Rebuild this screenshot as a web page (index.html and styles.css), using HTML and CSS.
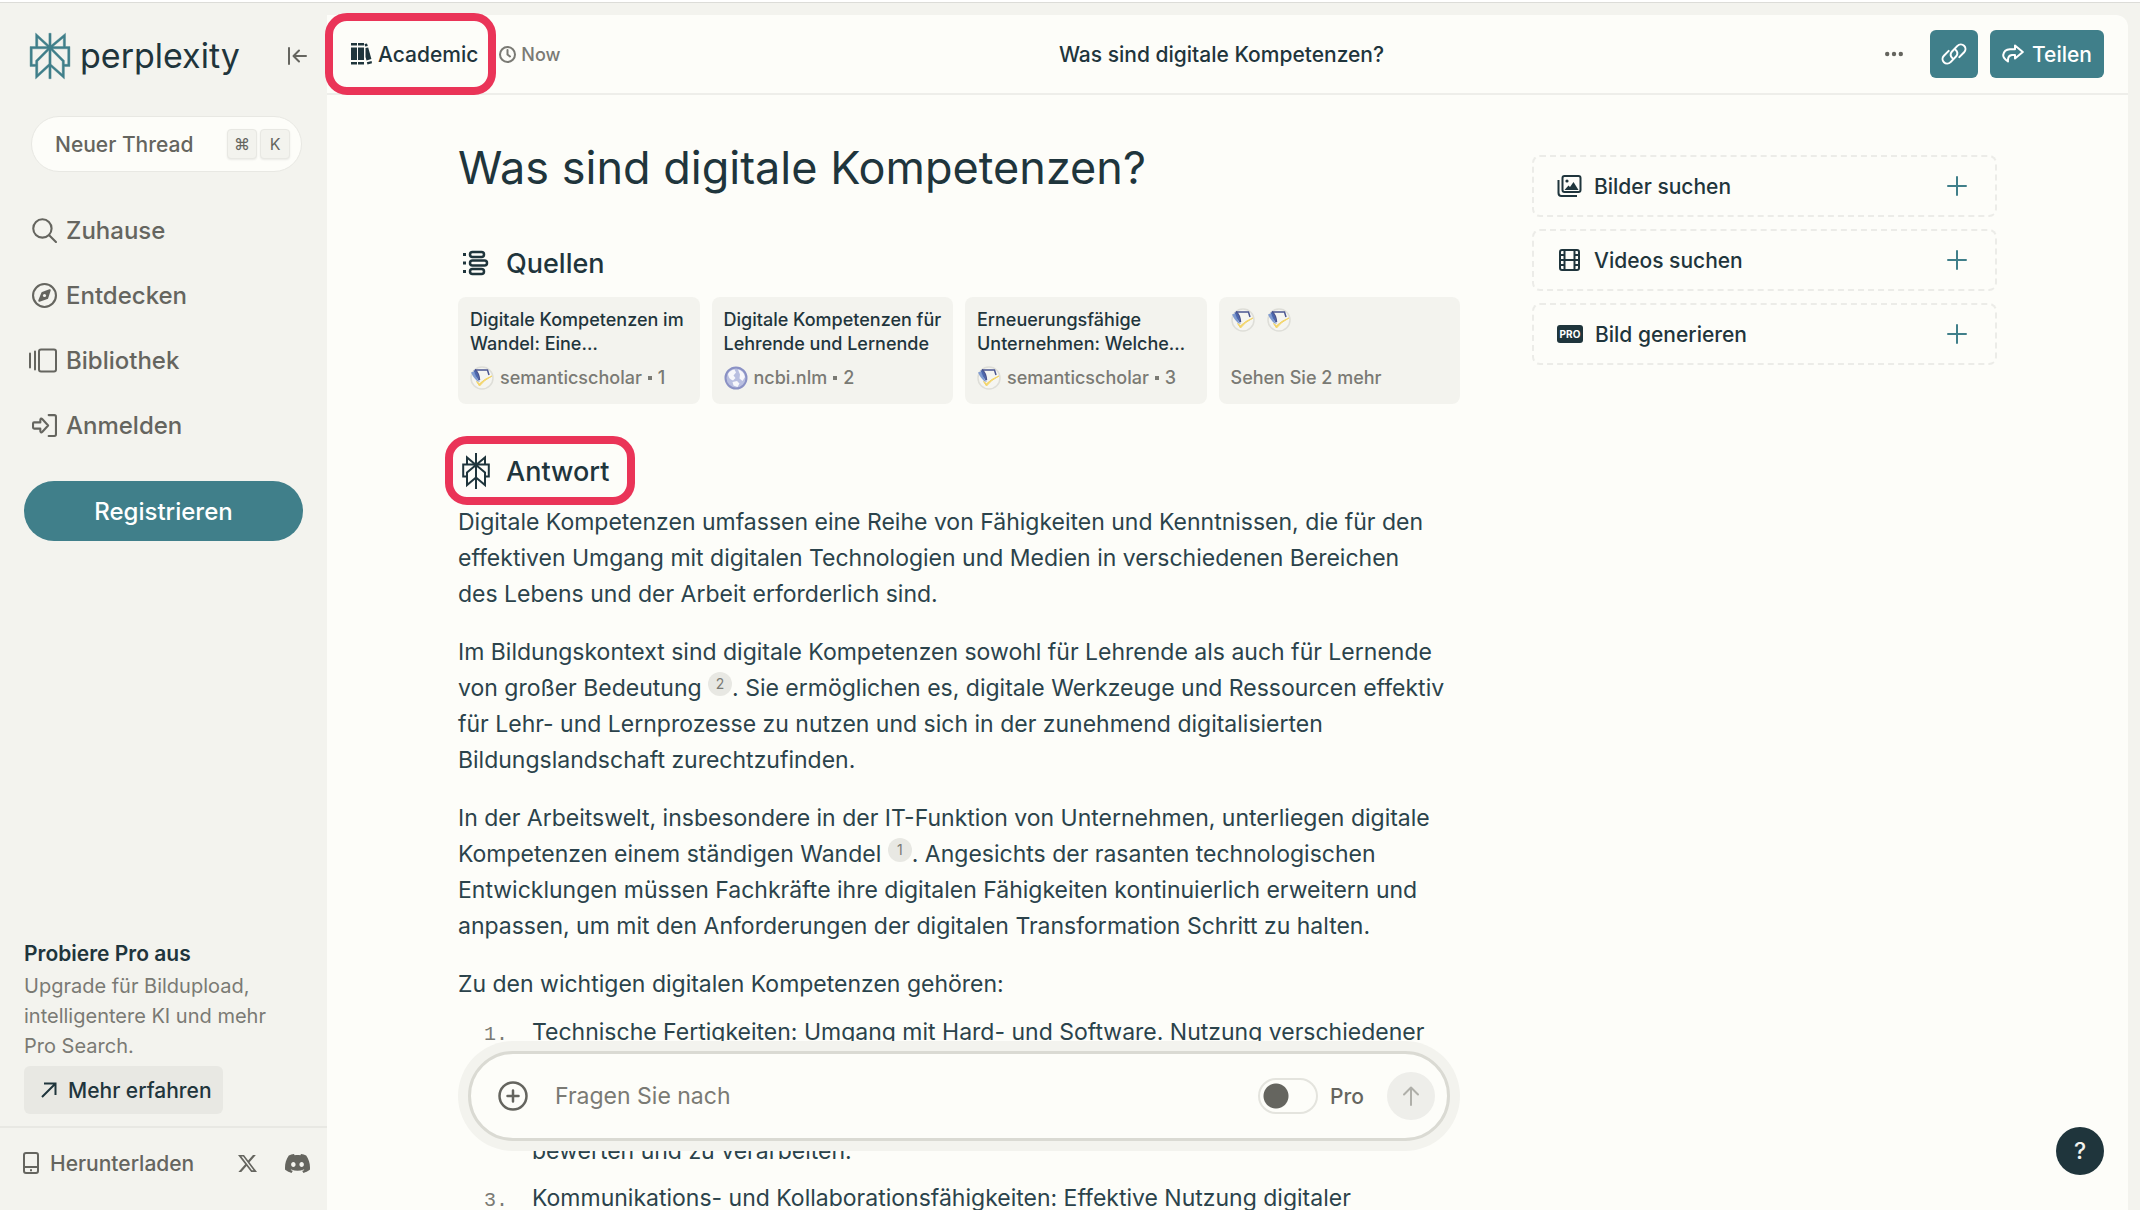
FILE: index.html
```html
<!DOCTYPE html>
<html lang="de">
<head>
<meta charset="utf-8">
<title>Was sind digitale Kompetenzen?</title>
<meta name="viewport" content="width=device-width, initial-scale=1">
<link rel="stylesheet" href="styles.css">
</head>
<body>
<svg class="defs" aria-hidden="true">
  <symbol id="scholar" viewBox="0 0 24 24">
    <circle cx="12" cy="12" r="11" fill="#f5f5f1" stroke="#deded8" stroke-width="1.5"/>
    <path d="M1 6.500L4 5.500L9 16.500Q4 13 1 6.500Z" fill="#7f9bd0"/>
    <path d="M3.500 4.500L6 4Q9 9 9.500 16Q5 10 3.500 4.500Z" fill="#4b68b0"/>
    <path d="M5 4H17.500L19 9" fill="none" stroke="#4a5590" stroke-width="1.500"/>
    <path d="M5 3.500Q9 7 9.500 14" fill="none" stroke="#4a5590" stroke-width="1.500"/>
    <path d="M6.500 15.500L9.500 20Q14 14 22 10Q14 13 9.600 17.800Z" fill="#f3d568" stroke="#f3d568" stroke-linejoin="round"/>
  </symbol>
  <symbol id="plus" viewBox="0 0 20 20">
    <path d="M10 1V19M1 10H19" fill="none" stroke="currentColor" stroke-width="2" stroke-linecap="round"/>
  </symbol>
</svg>
<div class="app">
  <aside class="sidebar">
    <div class="brand">
      <a class="brand-link" href="#">
        <svg class="brand-mark" viewBox="0 0 24 24" aria-hidden="true"><path fill="currentColor" stroke="currentColor" stroke-width=".2" d="M22.3977 7.0896h-2.3106V.0676l-7.5094 6.3542V.1577h-1.1554v6.1966L4.4904 0v7.0896H1.6023v10.3976h2.8882V24l6.932-6.3591v6.2005h1.1554v-6.0469l6.9318 6.1807v-6.4879h2.8882V7.0896zm-3.4657-4.531v4.531h-5.355l5.355-4.531zm-13.2862.0676 4.8691 4.4634H5.6458V2.6262zM2.7576 16.332V8.245h7.8476l-6.1149 6.1147v1.9723H2.7576zm2.8882 5.0404v-3.8852h.0001v-2.6488l5.7763-5.7764v7.0111l-5.7764 5.2993zm12.7086.0248-5.7766-5.1509V9.0618l5.7766 5.7766v6.5588zm2.8882-5.0652h-1.733v-1.9723L13.3948 8.245h7.8478v8.087z"/></svg>
        <span class="brand-name">perplexity</span>
      </a>
      <button class="icon-button" type="button" aria-label="Seitenleiste einklappen">
        <svg width="20" height="18" viewBox="0 0 20 18" fill="none" stroke="currentColor" stroke-width="2" stroke-linecap="round" stroke-linejoin="round"><path d="M2 1V17M19 9H7M12 3.500L6.500 9L12 14.500"/></svg>
      </button>
    </div>
    <button class="new-thread" type="button"><span>Neuer Thread</span><span class="keys"><kbd>⌘</kbd><kbd>K</kbd></span></button>
    <nav class="nav">
      <a href="#"><svg viewBox="0 0 24 24"><circle cx="10" cy="10" r="8.800"/><path d="M16.500 16.500L23 23"/></svg>Zuhause</a>
      <a href="#"><svg viewBox="0 0 24 24"><circle cx="12" cy="12" r="11"/><path d="M17 7L10 9.500L7 17L14.500 14.500Z" fill="currentColor"/><circle cx="12" cy="12" r="1.500" fill="#f3f3ee" stroke="none"/></svg>Entdecken</a>
      <a href="#"><svg class="wide" viewBox="0 0 28 24"><path d="M1 5V19M6 3V21"/><rect x="10" y="1" width="17" height="22" rx="2"/></svg>Bibliothek</a>
      <a href="#"><svg viewBox="0 0 24 24"><path d="M16 2H21.500Q23 2 23 3.500V20.500Q23 22 21.500 22H16"/><path d="M1 10Q1 9 2 9H8V6.500Q8.500 4.500 10 6L15.500 12L10 18Q8.500 19.500 8 17.500V15H2Q1 15 1 14Z"/></svg>Anmelden</a>
    </nav>
    <button class="signup" type="button">Registrieren</button>
    <section class="upsell">
      <h2>Probiere Pro aus</h2>
      <p>Upgrade für Bildupload, intelligentere KI und mehr Pro Search.</p>
      <button class="learn-more" type="button"><svg width="16" height="16" viewBox="0 0 16 16" fill="none" stroke="currentColor" stroke-width="2"><path d="M1 15L14.500 1.500M3 1.500H14.500V13"/></svg>Mehr erfahren</button>
    </section>
    <footer class="sidebar-footer">
      <a class="download" href="#"><svg width="16" height="22" viewBox="0 0 16 22" fill="none" stroke="currentColor" stroke-width="2"><rect x="1" y="1" width="14" height="20" rx="2"/><path d="M1 15H15M7 18.200H9"/></svg>Herunterladen</a>
      <a href="#" aria-label="X"><svg width="19" height="19" viewBox="0 0 24 24" fill="currentColor"><path d="M18.901 1.153h3.680l-8.040 9.190L24 22.846h-7.406l-5.800-7.584-6.638 7.584H.474l8.600-9.830L0 1.154h7.594l5.243 6.932ZM17.610 20.644h2.039L6.486 3.240H4.298Z"/></svg></a>
      <a href="#" aria-label="Discord"><svg width="25" height="25" viewBox="0 0 24 24" fill="currentColor"><path d="M20.317 4.3698a19.7913 19.7913 0 00-4.8851-1.5152.0741.0741 0 00-.0785.0371c-.211.3753-.4447.8648-.6083 1.2495-1.8447-.2762-3.68-.2762-5.4868 0-.1636-.3933-.4058-.8742-.6177-1.2495a.077.077 0 00-.0785-.037 19.7363 19.7363 0 00-4.8852 1.515.0699.0699 0 00-.0321.0277C.5334 9.0458-.319 13.5799.0992 18.0578a.0824.0824 0 00.0312.0561c2.0528 1.5076 4.0413 2.4228 5.9929 3.0294a.0777.0777 0 00.0842-.0276c.4616-.6304.8731-1.2952 1.226-1.9942a.076.076 0 00-.0416-.1057c-.6528-.2476-1.2743-.5495-1.8722-.8923a.077.077 0 01-.0076-.1277c.1258-.0943.2517-.1923.3718-.2914a.0743.0743 0 01.0776-.0105c3.9278 1.7933 8.18 1.7933 12.0614 0a.0739.0739 0 01.0785.0095c.1202.099.246.1981.3728.2924a.077.077 0 01-.0066.1276 12.2986 12.2986 0 01-1.873.8914.0766.0766 0 00-.0407.1067c.3604.698.7719 1.3628 1.225 1.9932a.076.076 0 00.0842.0286c1.961-.6067 3.9495-1.5219 6.0023-3.0294a.077.077 0 00.0313-.0552c.5004-5.177-.8382-9.6739-3.5485-13.6604a.061.061 0 00-.0312-.0286zM8.02 15.3312c-1.1825 0-2.1569-1.0857-2.1569-2.419 0-1.3332.9555-2.4189 2.157-2.4189 1.2108 0 2.1757 1.0952 2.1568 2.419 0 1.3332-.9555 2.4189-2.1569 2.4189zm7.9748 0c-1.1825 0-2.1569-1.0857-2.1569-2.419 0-1.3332.9554-2.4189 2.1569-2.4189 1.2108 0 2.1757 1.0952 2.1568 2.419 0 1.3332-.946 2.4189-2.1568 2.4189Z"/></svg></a>
    </footer>
  </aside>

  <main class="panel">
    <header class="topbar">
      <div class="topbar-left">
        <button class="focus marked" type="button"><svg width="21" height="22" viewBox="0 0 21 22" fill="currentColor"><path d="M0 0H6V2.500H0ZM0 4.500H6V17H0ZM0 19H6V21.500H0ZM7 0H13V2.500H7ZM7 4.500H13V17H7ZM7 19H13V21.500H7ZM13.500 1L16 .4L16.800 3L14.200 3.600ZM14.500 5L17.200 4.400L20.400 16L15.500 17.500L14.500 14ZM15.800 19.200L20.600 18L21 20.200L16.500 21.500Z"/></svg>Academic</button>
        <span class="time"><svg width="17" height="17" viewBox="0 0 17 17" fill="none" stroke="currentColor" stroke-width="2" stroke-linecap="round"><circle cx="8.500" cy="8.500" r="7.500"/><path d="M8.500 4V8.500L11 10.500"/></svg>Now</span>
      </div>
      <div class="topbar-title">Was sind digitale Kompetenzen?</div>
      <div class="topbar-actions">
        <button class="icon-button more" type="button" aria-label="Mehr"><svg width="18" height="6" viewBox="0 0 18 6" fill="currentColor"><circle cx="2.200" cy="3" r="2.200"/><circle cx="9" cy="3" r="2.200"/><circle cx="15.800" cy="3" r="2.200"/></svg></button>
        <button class="primary square" type="button" aria-label="Link kopieren"><svg width="26" height="22" viewBox="0 0 26 22" fill="none" stroke="currentColor" stroke-width="2" stroke-linecap="round"><path d="M11.500 15.200C9.300 13.500 9 10.600 10.800 8.700L16.400 2.900C18.300 1 21.300 1 23.100 2.800C24.900 4.600 24.900 7.400 23.100 9.300L18.300 14.100"/><path d="M14.500 6.800C16.700 8.500 17 11.400 15.200 13.300L9.600 19.100C7.700 21 4.700 21 2.900 19.200C1.100 17.400 1.100 14.600 2.900 12.700L7.700 7.900"/></svg></button>
        <button class="primary" type="button"><svg width="22" height="20" viewBox="0 0 22 20" fill="none" stroke="currentColor" stroke-width="2" stroke-linejoin="round"><path d="M13 1.500L20.800 8L13 14.500V11H10Q5.500 11.500 6 17.500Q1 14 1.200 11Q2 5.500 8 5.200H13Z"/></svg>Teilen</button>
      </div>
    </header>

    <div class="scroll">
      <div class="columns">
        <article class="thread">
          <h1>Was sind digitale Kompetenzen?</h1>
          <h2 class="section-title"><svg width="28" height="26" viewBox="0 0 28 26" fill="none" stroke="currentColor" stroke-width="2.500"><rect x="8" y="2" width="14" height="5" rx="2.500"/><rect x="8" y="10.500" width="17" height="5" rx="2.500"/><rect x="8" y="19" width="14" height="5" rx="2.500"/><path d="M1 4.500H4M1 13H4M1 21.500H4" stroke-width="3"/></svg>Quellen</h2>
          <div class="sources">
            <a class="source" href="#"><span class="source-title">Digitale Kompetenzen im<br>Wandel: Eine…</span><span class="source-meta"><svg class="favicon"><use href="#scholar"/></svg>semanticscholar<i></i>1</span></a>
            <a class="source" href="#"><span class="source-title">Digitale Kompetenzen für<br>Lehrende und Lernende</span><span class="source-meta"><svg class="favicon" viewBox="0 0 24 24"><circle cx="12" cy="12" r="10.500" fill="#b9bfe0" stroke="#8a91c4" stroke-width="2"/><path d="M4 8Q6 4 10.500 3.500L12 6.500L9.500 9.500L11.500 12L9 14.500Q4.500 13 4 8ZM14 3.500Q20 5 21 11L18.500 15L15.500 12.500L16 8.500ZM8.500 16L13 15L15.500 17.500L13.500 21L9.500 19.500Z" fill="#f7f7fb"/></svg>ncbi.nlm<i></i>2</span></a>
            <a class="source" href="#"><span class="source-title">Erneuerungsfähige<br>Unternehmen: Welche…</span><span class="source-meta"><svg class="favicon"><use href="#scholar"/></svg>semanticscholar<i></i>3</span></a>
            <a class="source" href="#"><span class="favicons"><svg class="favicon"><use href="#scholar"/></svg><svg class="favicon"><use href="#scholar"/></svg></span><span class="source-more">Sehen Sie 2 mehr</span></a>
          </div>
          <h2 class="section-title answer-title"><span class="marked answer-mark"><svg width="28" height="36" viewBox="0 0 28 36" fill="none" stroke="currentColor" stroke-width="2"><path d="M14 0V36M5 11.500V4.500L14 12L23 4.500V11.500M5 23.500H1.200V11.500H26.800V23.500H23M14 12L5 19.500V32L14 24.500L23 32V19.500L14 12"/></svg>Antwort</span></h2>
          <div class="answer">
            <p>Digitale Kompetenzen umfassen eine Reihe von Fähigkeiten und Kenntnissen, die für den<br>effektiven Umgang mit digitalen Technologien und Medien in verschiedenen Bereichen<br>des Lebens und der Arbeit erforderlich sind.</p>
            <p>Im Bildungskontext sind digitale Kompetenzen sowohl für Lehrende als auch für Lernende<br>von großer Bedeutung <a class="cite" href="#">2</a>. Sie ermöglichen es, digitale Werkzeuge und Ressourcen effektiv<br>für Lehr- und Lernprozesse zu nutzen und sich in der zunehmend digitalisierten<br>Bildungslandschaft zurechtzufinden.</p>
            <p>In der Arbeitswelt, insbesondere in der IT-Funktion von Unternehmen, unterliegen digitale<br>Kompetenzen einem ständigen Wandel <a class="cite" href="#">1</a>. Angesichts der rasanten technologischen<br>Entwicklungen müssen Fachkräfte ihre digitalen Fähigkeiten kontinuierlich erweitern und<br>anpassen, um mit den Anforderungen der digitalen Transformation Schritt zu halten.</p>
            <p>Zu den wichtigen digitalen Kompetenzen gehören:</p>
            <ol>
              <li>Technische Fertigkeiten: Umgang mit Hard- und Software. Nutzung verschiedener<br>digitaler Geräte und Anwendungen.</li>
              <li>Informationskompetenz: Fähigkeit, Informationen zu suchen, zu<br>bewerten und zu verarbeiten.</li>
              <li>Kommunikations- und Kollaborationsfähigkeiten: Effektive Nutzung digitaler<br>Kommunikationsmittel und Plattformen.</li>
            </ol>
          </div>
          <form class="composer">
            <div class="composer-box">
              <button class="icon-button" type="button" aria-label="Anhängen"><svg width="30" height="30" viewBox="0 0 30 30" fill="none" stroke="currentColor" stroke-width="2.500" stroke-linecap="round"><circle cx="15" cy="15" r="13.500"/><path d="M15 9.500V20.500M9.500 15H20.500"/></svg></button>
              <input class="question" type="text" placeholder="Fragen Sie nach" aria-label="Fragen Sie nach">
              <label class="pro"><input type="checkbox">Pro</label>
              <button class="send" type="submit" aria-label="Senden"><svg width="18" height="20" viewBox="0 0 18 20" fill="none" stroke="currentColor" stroke-width="2" stroke-linecap="round" stroke-linejoin="round"><path d="M9 19V1.500M2 8.500L9 1.500L16 8.500"/></svg></button>
            </div>
          </form>
        </article>
        <aside class="tools">
          <button type="button"><svg width="25" height="24" viewBox="0 0 25 24" fill="none" stroke="currentColor" stroke-width="2"><rect x="5.500" y="2" width="18" height="16" rx="2"/><path d="M1.500 6V19Q1.500 22 4.500 22H20"/><path d="M7.500 16L11.500 11.500L13 13L16.500 8L21.500 16Z" fill="currentColor" stroke="none"/><circle cx="10" cy="7" r="1.600" fill="currentColor" stroke="none"/></svg><span>Bilder suchen</span><svg class="plus"><use href="#plus"/></svg></button>
          <button type="button"><svg width="25" height="24" viewBox="0 0 25 24" fill="none" stroke="currentColor" stroke-width="2"><rect x="3" y="2" width="19" height="20" rx="2"/><path d="M7.500 2V22M17.500 2V22M7.500 12H17.500M3 7H7.500M3 12H7.500M3 17H7.500M17.500 7H22M17.500 12H22M17.500 17H22"/></svg><span>Videos suchen</span><svg class="plus"><use href="#plus"/></svg></button>
          <button type="button"><b class="pro-badge">PRO</b><span>Bild generieren</span><svg class="plus"><use href="#plus"/></svg></button>
        </aside>
      </div>
    </div>
    <button class="help" type="button" aria-label="Hilfe">?</button>
  </main>
</div>
</body>
</html>
```
FILE: styles.css
```css
:root {
  --page: #f3f3ee;
  --panel: #fdfdf9;
  --line: #e8e8e3;
  --teal: #407f8a;
  --ink: #1f353c;
  --body: #2b434b;
  --muted: #65655f;
  --soft: #7a7a74;
  --mark: #ea3458;
}
* { box-sizing: border-box; }
body {
  margin: 0;
  background: var(--page);
  color: var(--ink);
  font-family: Inter, "Liberation Sans", sans-serif;
  font-size: 23px;
}
button { border: 0; padding: 0; background: none; color: inherit; font: inherit; cursor: pointer; }
a { color: inherit; text-decoration: none; }
h1, h2, p, ol { margin: 0; padding: 0; }
svg { flex: none; display: block; }
.defs { position: absolute; width: 0; height: 0; }

.app {
  display: flex;
  height: 100vh;
  border-top: 2px solid #fff;
  box-shadow: inset 0 1px #dcdcd8;
}

/* Sidebar */
.sidebar {
  flex: none;
  width: 327px;
  display: flex;
  flex-direction: column;
  padding-top: 30px;
  color: var(--muted);
  font-size: 21px;
}
.brand { display: flex; align-items: center; justify-content: space-between; padding: 0 20px 0 27px; }
.brand-link { display: flex; align-items: center; gap: 7px; color: var(--teal); }
.brand-mark { width: 46px; height: 48px; }
.brand-name { font-size: 34px; line-height: 44px; color: var(--ink); }
.icon-button { display: grid; place-items: center; color: var(--muted); }
.new-thread {
  display: flex;
  align-items: center;
  justify-content: space-between;
  height: 56px;
  margin: 36px 25px 0 31px;
  padding: 0 11px 0 23px;
  border: 1px solid var(--line);
  border-radius: 28px;
  background: var(--panel);
  font-weight: 500;
}
.keys { display: flex; gap: 3px; }
kbd {
  display: grid;
  place-items: center;
  width: 30px;
  height: 30px;
  border: 1px solid var(--line);
  border-radius: 4px;
  background: var(--page);
  box-shadow: 0 1px 2px #00000014;
  font-family: inherit;
  font-size: 16px;
  font-weight: 400;
}
.nav { display: grid; margin-top: 26px; }
.nav a { display: flex; align-items: center; gap: 9px; height: 65px; padding-left: 32px; font-size: 24px; font-weight: 500; }
.nav svg { width: 25px; height: 25px; fill: none; stroke: currentColor; stroke-width: 2; stroke-linecap: round; stroke-linejoin: round; }
.nav .wide { width: 28px; margin-left: -3px; }
.signup {
  height: 60px;
  margin: 23px 24px 0;
  border-radius: 30px;
  background: var(--teal);
  color: #fff;
  font-size: 24px;
  font-weight: 500;
}
.upsell { margin-top: auto; padding: 0 24px 12px; }
.upsell h2 { font-size: 21px; line-height: 34px; font-weight: 600; color: var(--ink); }
.upsell p { font-size: 20px; line-height: 30px; color: var(--soft); }
.learn-more {
  display: flex;
  align-items: center;
  gap: 11px;
  height: 48px;
  margin-top: 5px;
  padding: 0 11px 0 17px;
  border-radius: 6px;
  background: #e8e8e3;
  color: var(--ink);
  font-weight: 500;
}
.sidebar-footer {
  display: flex;
  align-items: center;
  height: 84px;
  padding: 0 17px 12px 23px;
  border-top: 2px solid #e8e8e3;
  gap: 28px;
  font-weight: 500;
}
.download { display: flex; align-items: center; gap: 11px; margin-right: auto; }

/* Main panel */
.panel {
  position: relative;
  flex: 1;
  min-width: 0;
  display: flex;
  flex-direction: column;
  margin: 13px 12px 0 0;
  border-radius: 0 12px 0 0;
  background: var(--panel);
}
.topbar {
  flex: none;
  display: grid;
  grid-template-columns: 1fr auto 1fr;
  align-items: center;
  height: 80px;
  padding: 0 24px 0 12px;
  border-bottom: 2px solid #eeeeea;
  font-size: 21px;
  font-weight: 500;
}
.topbar-left { display: flex; align-items: center; gap: 9px; }
.focus { display: flex; align-items: center; gap: 6px; height: 48px; padding: 0 12px; }
.marked { position: relative; }
.marked::after {
  content: "";
  position: absolute;
  inset: -17px -6px -17px -14px;
  border: 8px solid var(--mark);
  border-radius: 22px;
  pointer-events: none;
}
.time { display: flex; align-items: center; gap: 5px; color: var(--soft); font-size: 18px; }
.topbar-actions { display: flex; justify-content: flex-end; gap: 12px; }
.more { width: 48px; }
.primary {
  display: flex;
  align-items: center;
  justify-content: center;
  gap: 8px;
  height: 48px;
  padding: 0 12px;
  border-radius: 6px;
  background: var(--teal);
  color: #fff;
}
.square { width: 48px; padding: 0; }

.scroll { flex: 1; min-height: 0; padding: 0 24px; overflow-y: auto; scrollbar-width: none; }
.columns {
  display: grid;
  grid-template-columns: minmax(0, 1002fr) minmax(0, 465fr);
  gap: 72px;
  max-width: 1539px;
  margin: 0 auto;
}
.thread { padding-top: 43px; }
h1 { font-size: 45px; line-height: 60px; font-weight: 400; }
.section-title { display: flex; align-items: center; gap: 16px; height: 40px; padding-left: 4px; font-size: 27px; font-weight: 500; }
h1 + .section-title { margin-top: 45px; }
.sources { display: grid; grid-template-columns: repeat(4, minmax(0, 1fr)); gap: 12px; margin-top: 14px; }
.source {
  display: flex;
  flex-direction: column;
  justify-content: space-between;
  height: 107px;
  padding: 11px 12px 14px;
  border-radius: 8px;
  background: var(--page);
  font-size: 18px;
  line-height: 24px;
  font-weight: 500;
  white-space: nowrap;
}
.source-meta { display: flex; align-items: center; gap: 6px; color: var(--soft); }
.source-meta i { width: 4px; height: 4px; background: currentColor; }
.favicon { width: 24px; height: 24px; }
.favicons { display: flex; gap: 12px; }
.source-more { color: var(--soft); }
.answer-title { margin-top: 47px; }
.answer-mark { display: flex; align-items: center; gap: 16px; }
.answer-mark::after { inset: -17px -26px -16px -17px; }
.answer { margin-top: 13px; line-height: 36px; color: var(--body); white-space: nowrap; }
.answer p + p { margin-top: 22px; }
.cite {
  display: inline-grid;
  place-items: center;
  width: 24px;
  height: 24px;
  border-radius: 12px;
  background: #e8e8e3;
  color: var(--soft);
  font-size: 14px;
  line-height: 24px;
  vertical-align: 7px;
}
.answer ol { margin-top: 12px; padding-left: 74px; }
.answer li + li { margin-top: 11px; }
.answer li::marker { color: var(--soft); font-family: "Liberation Mono", monospace; font-size: 20px; content: counter(list-item) ".  "; }

.composer {
  position: sticky;
  bottom: 59px;
  margin-top: 60px;
  padding: 10px;
  border-radius: 56px;
  background: var(--page);
}
.composer-box {
  display: flex;
  align-items: center;
  height: 90px;
  padding: 0 12px 0 27px;
  border: 3px solid #dadad3;
  border-radius: 45px;
  background: var(--panel);
}
.question {
  flex: 1;
  min-width: 0;
  height: 48px;
  margin: 0 24px;
  padding: 0 3px;
  border: 0;
  outline: 0;
  background: none;
  color: var(--body);
  font: inherit;
}
.question::placeholder { color: var(--soft); opacity: 1; }
.pro { display: flex; align-items: center; gap: 12px; color: var(--muted); font-size: 21px; font-weight: 500; }
.pro input {
  appearance: none;
  width: 60px;
  height: 36px;
  margin: 0;
  border: 2px solid #e4e4de;
  border-radius: 18px;
  background: radial-gradient(circle at 16px 16px, var(--muted) 12px, transparent 13px);
}
.send {
  display: grid;
  place-items: center;
  width: 48px;
  height: 48px;
  margin-left: 23px;
  border-radius: 24px;
  background: #eeeeea;
  color: #afafa9;
}

.tools { display: grid; align-content: start; gap: 12px; padding-top: 60px; }
.tools button {
  display: flex;
  align-items: center;
  gap: 12px;
  height: 62px;
  padding: 0 28px 0 23px;
  border: 2px dashed #ecece8;
  border-radius: 8px;
  font-size: 21px;
  font-weight: 500;
}
.tools .plus { width: 20px; height: 20px; margin-left: auto; color: var(--teal); }
.pro-badge {
  display: grid;
  place-items: center;
  width: 26px;
  height: 18px;
  border-radius: 3px;
  background: var(--ink);
  color: #fff;
  font-size: 10px;
  font-weight: 700;
}
.help {
  position: absolute;
  right: 24px;
  bottom: 35px;
  width: 48px;
  height: 48px;
  border-radius: 24px;
  background: var(--ink);
  color: #f3f3ee;
  font-weight: 500;
}
```
